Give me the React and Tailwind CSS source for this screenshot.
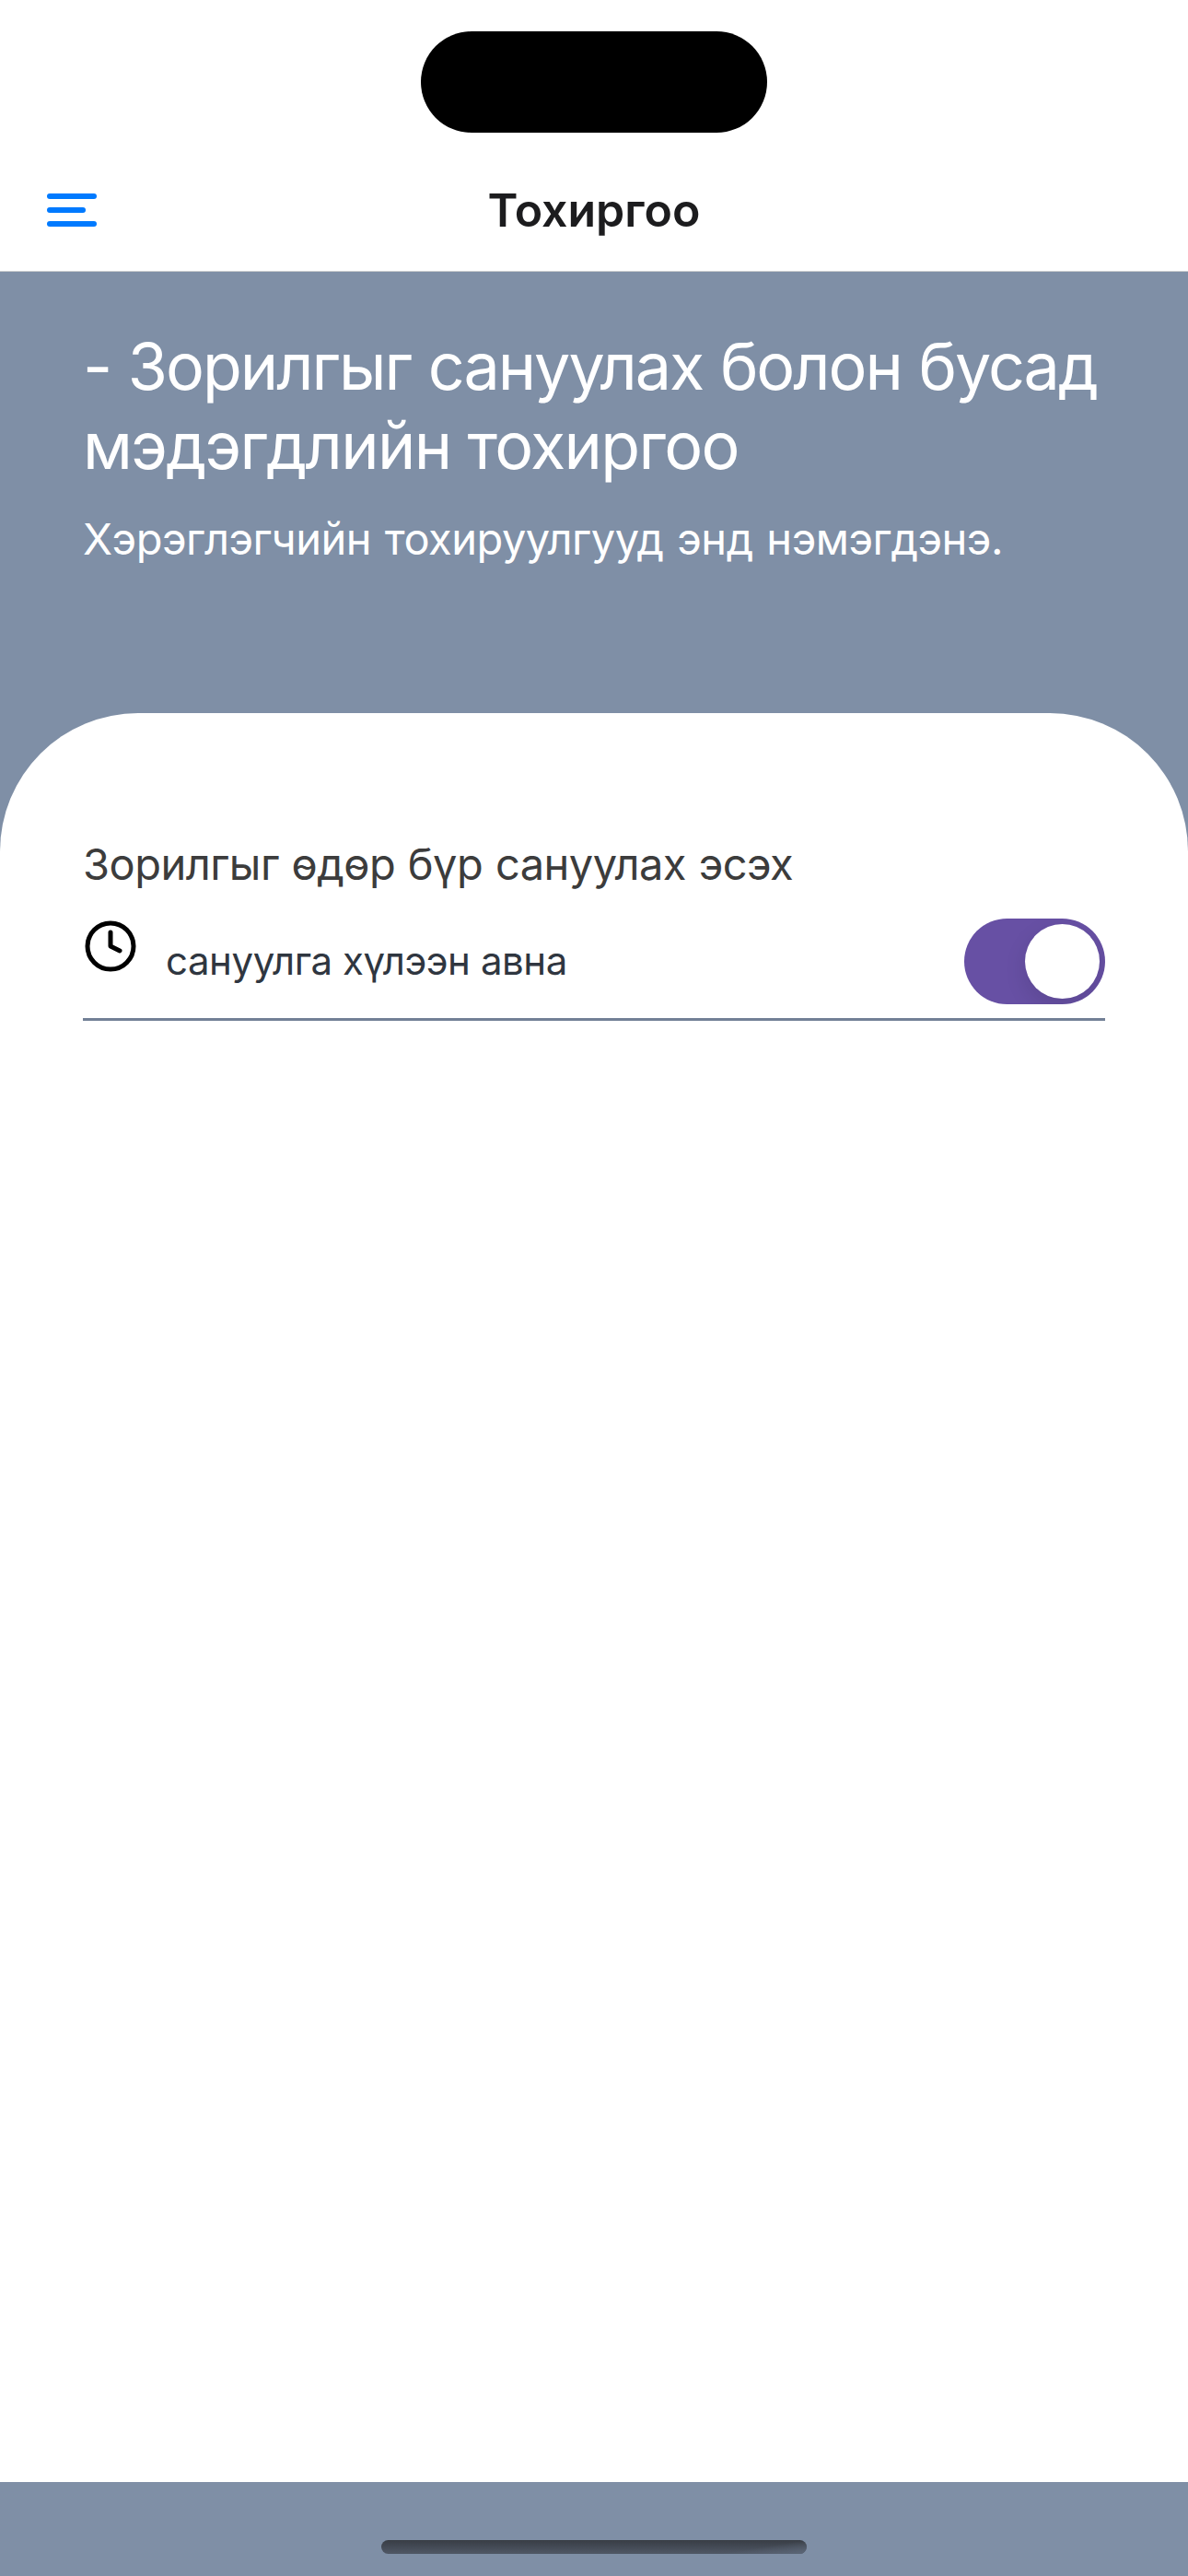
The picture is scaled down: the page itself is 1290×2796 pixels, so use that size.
import React, { useState } from "react";
import { Clock } from "lucide-react";

function MenuButton() {
  return (
    <button type="button" aria-label="Цэс" className="flex w-[54px] flex-col gap-[9px]">
      <span className="h-1.5 w-[54px] rounded-full bg-[#007aff]" />
      <span className="h-1.5 w-[42px] rounded-full bg-[#007aff]" />
      <span className="h-1.5 w-[54px] rounded-full bg-[#007aff]" />
    </button>
  );
}

function Header() {
  return (
    <header className="shrink-0 border-b border-[#c8cacd] bg-white">
      <div className="flex h-[162px] justify-center pt-[33.5px]">
        <div className="h-[110.5px] w-[376.5px] rounded-full bg-black" />
      </div>
      <div className="grid h-[132px] grid-cols-[1fr_auto_1fr] items-center px-[51px]">
        <MenuButton />
        <h1 className="text-[50px] leading-[60px] font-semibold text-[#1c1c1e]">Тохиргоо</h1>
      </div>
    </header>
  );
}

function Toggle({ checked, onChange }) {
  return (
    <button
      type="button"
      role="switch"
      aria-checked={checked}
      aria-label="сануулга хүлээн авна"
      onClick={() => onChange(!checked)}
      className={`flex h-[93px] w-[153px] items-center overflow-hidden rounded-full px-1.5 ${
        checked ? "justify-end bg-[#6750a4]" : "justify-start bg-[#e9e9ea]"
      }`}
    >
      <span className="size-[81px] rounded-full bg-white shadow-[0_9px_24px_rgba(0,0,0,0.11)]" />
    </button>
  );
}

export default function App() {
  const [remind, setRemind] = useState(true);

  return (
    <div className="flex h-[2796px] w-[1290px] flex-col overflow-hidden bg-[#7f8fa6] font-['Inter',sans-serif]">
      <Header />

      <section className="h-[479px] shrink-0 px-[90px] pt-[60px] whitespace-nowrap text-white">
        <h2 className="text-[70px] leading-[86px]">
          <span className="block tracking-[-2.02px] [word-spacing:1px]">- Зорилгыг сануулах болон бусад</span>
          <span className="block tracking-[-1.65px]">мэдэгдлийн тохиргоо</span>
        </h2>
        <p className="mt-[29px] text-[47px] leading-[57px] tracking-[-0.5px] [word-spacing:2px]">
          Хэрэглэгчийн тохируулгууд энд нэмэгдэнэ.
        </p>
      </section>

      <main className="flex-1 rounded-t-[150px] bg-white px-[90px] pt-[135px]">
        <h3 className="text-[47px] leading-[57px] tracking-[-0.53px] text-[#3c3c3c] [word-spacing:1px]">
          Зорилгыг өдөр бүр сануулах эсэх
        </h3>
        <div className="mt-[31px] flex items-start border-b-[3px] border-[#728096] pb-[15px]">
          <Clock className="size-[60px] shrink-0 text-black" strokeWidth={2} />
          <p className="mt-5 ml-[30px] flex-1 text-[42px] leading-[51px] tracking-[-0.44px] text-[#2f3640]">
            сануулга хүлээн авна
          </p>
          <Toggle checked={remind} onChange={setRemind} />
        </div>
      </main>

      <footer className="flex h-[102px] shrink-0 items-end justify-center pb-6">
        <div className="flex h-[15px] w-[462px] justify-end overflow-hidden rounded-full bg-linear-to-b from-[#383d45] to-[#505866]">
          <div className="h-full w-24 bg-linear-to-br from-transparent from-50% to-[#5b6677]" />
        </div>
      </footer>
    </div>
  );
}
